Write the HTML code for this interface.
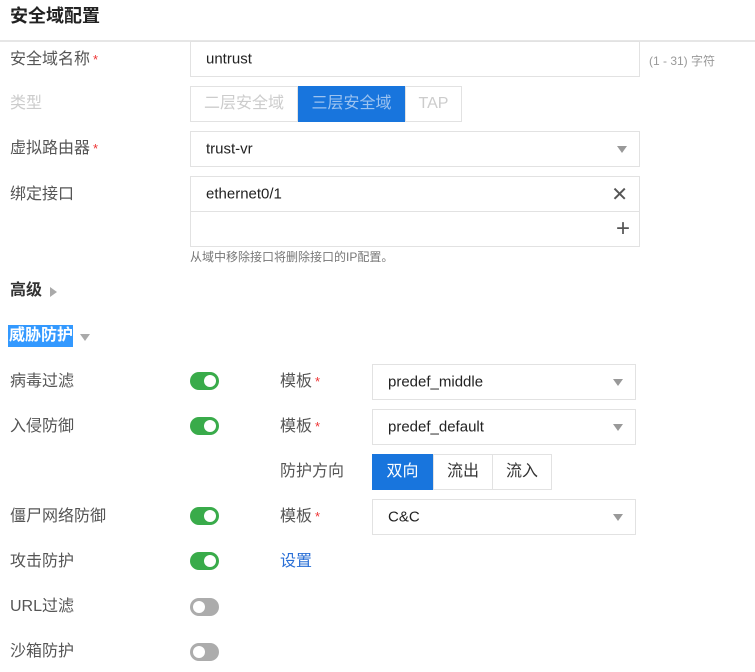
<!DOCTYPE html>
<html><head><meta charset="utf-8"><style>
*{box-sizing:border-box;margin:0;padding:0}
body{width:755px;height:672px;background:#fff;position:relative;overflow:hidden;font-family:"Liberation Sans","Noto Sans CJK SC",sans-serif;color:#333;font-size:15px}
.a{position:absolute;white-space:nowrap}
.lbl{position:absolute;left:10px;color:#555;font-size:16px;line-height:20px}
.req{color:#e33;font-size:13px;vertical-align:top;margin-left:3px}
.box{position:absolute;border:1px solid #e2e2e2;background:#fff}
.txt{position:absolute;left:15px;top:50%;transform:translateY(-50%);color:#222;font-size:15px}
.arr{position:absolute;right:12px;top:50%;margin-top:-3px;width:0;height:0;border-left:5px solid transparent;border-right:5px solid transparent;border-top:7px solid #999}
.tg{position:absolute;left:190px;width:29px;height:18px;border-radius:9px;background:#39ab4a}
.tg::after{content:"";position:absolute;top:3px;right:3px;width:12px;height:12px;border-radius:50%;background:#fff}
.tg.off{background:#acacac}
.tg.off::after{right:auto;left:3px}
.btn{position:absolute;border:1px solid #e2e2e2;text-align:center;font-size:16px;color:#333}
</style></head><body>
<div class="a" style="left:10px;top:5px;font-size:18px;font-weight:bold;color:#222;line-height:22px">安全域配置</div>
<div class="a" style="left:0;top:40px;width:755px;height:2px;background:#e6e6e6"></div>

<div class="lbl" style="top:50px">安全域名称<span class="req">*</span></div>
<div class="box" style="left:190px;top:41px;width:450px;height:36px"><span class="txt">untrust</span></div>
<div class="a" style="left:649px;top:52px;font-size:12px;color:#999">(1 - 31) 字符</div>

<div class="lbl" style="top:94px;color:#ccc">类型</div>
<div class="btn" style="left:190px;top:86px;width:108px;height:36px;line-height:34px;color:#ccc">二层安全域</div>
<div class="btn" style="left:298px;top:86px;width:107px;height:36px;line-height:34px;color:#9cc3f0;background:#1875dd;border-color:#1875dd">三层安全域</div>
<div class="btn" style="left:405px;top:86px;width:57px;height:36px;line-height:34px;color:#ccc">TAP</div>

<div class="lbl" style="top:139px">虚拟路由器<span class="req">*</span></div>
<div class="box" style="left:190px;top:131px;width:450px;height:36px"><span class="txt">trust-vr</span><span class="arr"></span></div>

<div class="lbl" style="top:185px">绑定接口</div>
<div class="box" style="left:190px;top:176px;width:450px;height:36px"><span class="txt">ethernet0/1</span><span class="a" style="right:11px;top:5px;font-size:20px;color:#555">✕</span></div>
<div class="box" style="left:190px;top:211px;width:450px;height:36px"><span class="a" style="right:9px;top:3px;font-size:24px;color:#555;font-weight:300">+</span></div>
<div class="a" style="left:190px;top:248px;font-size:12px;color:#777">从域中移除接口将删除接口的IP配置。</div>

<div class="a" style="left:10px;top:281px;font-size:16px;font-weight:bold;color:#333;line-height:20px">高级</div>
<div class="a" style="left:50px;top:287px;width:0;height:0;border-top:5px solid transparent;border-bottom:5px solid transparent;border-left:7px solid #aaa"></div>

<div class="a" style="left:8px;top:325px;width:65px;height:22px;background:#3399ff"></div>
<div class="a" style="left:9px;top:325px;font-size:16px;font-weight:bold;color:#fff;line-height:22px">威胁防护</div>
<div class="a" style="left:80px;top:334px;width:0;height:0;border-left:5px solid transparent;border-right:5px solid transparent;border-top:7px solid #aaa"></div>

<div class="lbl" style="top:372px">病毒过滤</div>
<div class="tg" style="top:372px"></div>
<div class="lbl" style="left:280px;top:372px">模板<span class="req">*</span></div>
<div class="box" style="left:372px;top:364px;width:264px;height:36px"><span class="txt">predef_middle</span><span class="arr"></span></div>

<div class="lbl" style="top:417px">入侵防御</div>
<div class="tg" style="top:417px"></div>
<div class="lbl" style="left:280px;top:417px">模板<span class="req">*</span></div>
<div class="box" style="left:372px;top:409px;width:264px;height:36px"><span class="txt">predef_default</span><span class="arr"></span></div>

<div class="lbl" style="left:280px;top:462px">防护方向</div>
<div class="btn" style="left:372px;top:454px;width:61px;height:36px;line-height:34px;background:#1875dd;border-color:#1875dd;color:#fff">双向</div>
<div class="btn" style="left:433px;top:454px;width:60px;height:36px;line-height:34px">流出</div>
<div class="btn" style="left:492px;top:454px;width:60px;height:36px;line-height:34px">流入</div>

<div class="lbl" style="top:507px">僵尸网络防御</div>
<div class="tg" style="top:507px"></div>
<div class="lbl" style="left:280px;top:507px">模板<span class="req">*</span></div>
<div class="box" style="left:372px;top:499px;width:264px;height:36px"><span class="txt">C&amp;C</span><span class="arr"></span></div>

<div class="lbl" style="top:552px">攻击防护</div>
<div class="tg" style="top:552px"></div>
<div class="lbl" style="left:280px;top:552px;color:#2a6fd6">设置</div>

<div class="lbl" style="top:597px">URL过滤</div>
<div class="tg off" style="top:598px"></div>

<div class="lbl" style="top:642px">沙箱防护</div>
<div class="tg off" style="top:643px"></div>
</body></html>
